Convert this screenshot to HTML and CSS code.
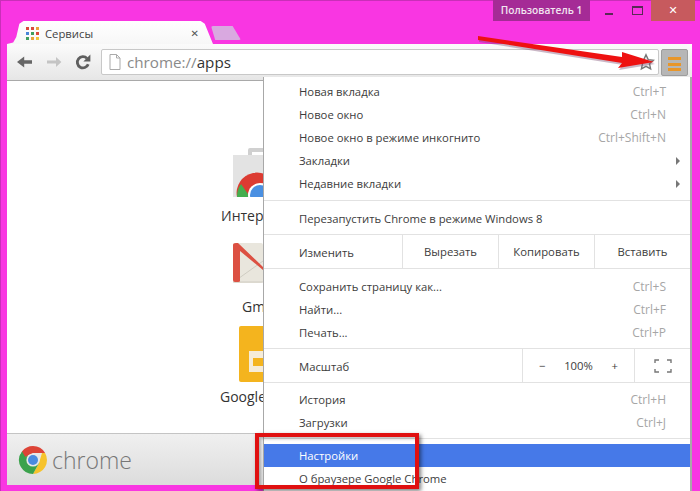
FILE: index.html
```html
<!doctype html>
<html lang="ru">
<head>
    <meta charset="UTF-8">
    <title>Сервисы</title>
    <link rel="stylesheet" href="styles.css">
</head>
<body>
    <div class="title-bar">
        <div class="user-badge">Пользователь 1</div>
        <div class="win-btn"><span class="win-min"></span></div>
        <div class="win-btn"><span class="win-max"></span></div>
        <div class="win-close">✕</div>
    </div>

    <div class="window">
        <div class="tab-strip">
            <div class="tab">
                <div class="favicon">
                    <i class="c-red"></i><i class="c-red"></i><i class="c-orange"></i>
                    <i class="c-blue"></i><i class="c-green"></i><i class="c-red"></i>
                    <i class="c-green"></i><i class="c-orange"></i><i class="c-yellow"></i>
                </div>
                <span class="tab-title">Сервисы</span>
                <span class="tab-close">✕</span>
            </div>
            <div class="new-tab"></div>
        </div>

        <div class="toolbar">
            <svg class="nav-icon" width="18" height="18" viewBox="0 0 18 18"><path d="M16 7.2H8.2V3.4L1 9l7.2 5.6v-3.8H16z" fill="#666"/></svg>
            <svg class="nav-icon" width="18" height="18" viewBox="0 0 18 18"><path d="M2 7.6h9V4l5.4 5-5.4 5v-3.6H2z" fill="#c4c4c4"/></svg>
            <svg class="nav-icon" width="18" height="18" viewBox="0 0 18 18"><path d="M14.2 11.2A5.6 5.6 0 1 1 13 5.4" fill="none" stroke="#5f5f5f" stroke-width="2.8"/><path d="M16.4 1.6v7h-7z" fill="#5f5f5f"/></svg>
            <div class="omnibox">
                <svg class="page-icon" width="12" height="16" viewBox="0 0 12 16"><path d="M1 .5h6.5L11 4v11.5H1z M7.5 .5V4H11" fill="#fff" stroke="#aaa"/></svg>
                <span class="url-scheme">chrome://</span><span class="url-host">apps</span>
                <svg class="star-icon" width="18" height="18" viewBox="0 0 18 18"><path d="M9 1.8l2.2 4.8 5.2.6-3.9 3.5 1.1 5.2L9 13.3l-4.6 2.6 1.1-5.2L1.6 7.2l5.2-.6z" fill="#eee" stroke="#777" stroke-width="1.4"/></svg>
            </div>
            <div class="menu-btn"><i></i><i></i><i></i></div>
        </div>

        <div class="content">
            <div class="app app-store">
                <svg width="30" height="50" viewBox="0 0 30 50">
                    <path d="M15 9V3a2 2 0 0 1 2-2h14v4H19v4z" fill="#d0d0d0"/>
                    <rect y="8" width="30" height="42" fill="#e3e3e3"/>
                    <path d="M4 50a20 20 0 0 1 40-8v8z" fill="#dc3b32"/>
                    <path d="M4 50a20 20 0 0 1 4-13l9 13z" fill="#45ae4f"/>
                    <circle cx="27" cy="48" r="12" fill="#fff"/>
                    <circle cx="27" cy="48" r="10" fill="#4a90e2"/>
                </svg>
                <div class="app-name">Интер</div>
            </div>
            <div class="app app-gmail">
                <svg width="30" height="40" viewBox="0 0 30 40">
                    <rect width="30" height="40" rx="2" fill="#e9e6dd"/>
                    <path d="M2 38l28-20M0 39h30" stroke="#cfccc2" fill="none"/>
                    <path d="M0 2q0-2 3-2h2l25 24v3L7 8v30q0 1-2 1H2q-2 0-2-2z" fill="#dc5042"/>
                </svg>
                <div class="app-name">Gm</div>
            </div>
            <div class="app app-slides">
                <svg width="24" height="56" viewBox="0 0 24 56">
                    <rect width="36" height="56" rx="2" fill="#f4b41e"/>
                    <path d="M10 25h26v21H10z" fill="#f6ecd8"/>
                    <path d="M14 32h22v8H14z" fill="#f4b41e"/>
                </svg>
                <div class="app-name">Google</div>
            </div>
        </div>

        <div class="footer">
            <svg width="30" height="30" viewBox="0 0 30 30">
                <path d="M15 15L4.6 21A12 12 0 0 1 4.6 6z" fill="#4caf50"/>
                <path d="M15 1a14 14 0 0 1 12.1 7H15L5 13 4 6.5A14 14 0 0 1 15 1z" fill="#dd4437"/>
                <path d="M27.1 8A14 14 0 0 1 15 29l6-11 3-10z" fill="#f6c32c"/>
                <path d="M2.9 22A14 14 0 0 1 4 6.5L11 18l10 0-6 11A14 14 0 0 1 2.9 22z" fill="#3ba24c"/>
                <circle cx="15" cy="15" r="6.6" fill="#e8e8e8"/>
                <circle cx="15" cy="15" r="5" fill="#4a8be0"/>
            </svg>
            <span class="chrome-word">chrome</span>
        </div>
    </div>

    <!-- выпадающее меню -->
    <div class="menu">
        <div class="menu-group">
            <div class="menu-item"><span>Новая вкладка</span><span class="keys">Ctrl+T</span></div>
            <div class="menu-item"><span>Новое окно</span><span class="keys">Ctrl+N</span></div>
            <div class="menu-item"><span>Новое окно в режиме инкогнито</span><span class="keys">Ctrl+Shift+N</span></div>
            <div class="menu-item"><span>Закладки</span><span class="sub-arrow"></span></div>
            <div class="menu-item"><span>Недавние вкладки</span><span class="sub-arrow"></span></div>
        </div>
        <div class="menu-group short">
            <div class="menu-item"><span>Перезапустить Chrome в режиме Windows 8</span></div>
        </div>
        <div class="menu-row edit-row">
            <div class="row-label">Изменить</div>
            <div class="row-cell">Вырезать</div>
            <div class="row-cell">Копировать</div>
            <div class="row-cell">Вставить</div>
        </div>
        <div class="menu-group short">
            <div class="menu-item"><span>Сохранить страницу как...</span><span class="keys">Ctrl+S</span></div>
            <div class="menu-item"><span>Найти...</span><span class="keys">Ctrl+F</span></div>
            <div class="menu-item"><span>Печать...</span><span class="keys">Ctrl+P</span></div>
        </div>
        <div class="menu-row zoom-row">
            <div class="row-label">Масштаб</div>
            <div class="row-cell zoom-cell"><span>−</span><span>100%</span><span>+</span></div>
            <div class="row-cell">
                <svg width="18" height="14" viewBox="0 0 18 14"><path d="M1 4V1h4M13 1h4v3M17 10v3h-4M5 13H1v-3" fill="none" stroke="#777" stroke-width="1.4"/></svg>
            </div>
        </div>
        <div class="menu-group last">
            <div class="menu-item"><span>История</span><span class="keys">Ctrl+H</span></div>
            <div class="menu-item"><span>Загрузки</span><span class="keys">Ctrl+J</span></div>
        </div>
        <div class="menu-item active"><span>Настройки</span></div>
        <div class="menu-item"><span>О браузере Google Chrome</span></div>
    </div>

    <!-- пометки поверх скриншота -->
    <svg class="red-arrow" width="200" height="50" viewBox="0 0 200 50">
        <path d="M8 9L8 12 L152 35 L148 40 L184 34 L152 24 L152 29z" fill="#7a4a70" opacity=".4" transform="translate(1 2)"/>
        <path d="M8 8L8 12 L152 35 L148 40 L184 34 L152 24 L152 29z" fill="#ee1111"/>
    </svg>
    <div class="red-box"></div>
</body>
</html>
```

FILE: styles.css
```css
html, body {
    margin: 0;
    padding: 0;
}
body {
    width: 700px;
    height: 491px;
    overflow: hidden;
    position: relative;
    background-color: #f936e2;
    box-shadow: inset 1px 1px 0 #c92fb8;
    font-family: 'Open Sans', 'Liberation Sans', sans-serif;
    font-size: 12px;
    color: #333;
}
.title-bar {
    height: 21px;
    display: flex;
    justify-content: flex-end;
    padding-right: 5px;
}
.user-badge {
    width: 97px;
    margin-right: 5px;
    background-color: #a52b96;
    color: #f2e6f0;
    font-size: 10.2px;
    font-weight: 600;
    line-height: 21px;
    text-align: center;
}
.win-btn {
    width: 28px;
    display: flex;
    align-items: center;
    justify-content: center;
}
.win-min {
    width: 8px;
    height: 2px;
    margin-top: 7px;
    background-color: #5a2a55;
}
.win-max {
    width: 9px;
    height: 6px;
    border: 1px solid #5a2a55;
    border-top-width: 2px;
}
.win-close {
    width: 44px;
    background-color: #c75a5e;
    color: #fff;
    text-align: center;
    line-height: 21px;
    font-size: 11px;
    font-family: 'DejaVu Sans', sans-serif;
}
.window {
    margin: 0 8px 0 7px;
}
.tab-strip {
    height: 23px;
    display: flex;
    align-items: flex-end;
}
.tab {
    width: 206px;
    height: 23px;
    box-sizing: border-box;
    padding: 1px 12px 0 19px;
    display: flex;
    align-items: center;
    background: linear-gradient(#ffffff, #f7f7f7);
    clip-path: polygon(0 100%, 3% 94%, 4.5% 70%, 6% 12%, 8% 0, 94% 0, 96% 12%, 100% 100%);
}
.favicon {
    width: 13px;
    display: grid;
    grid-template-columns: repeat(3, 3px);
    gap: 2px;
    margin-right: 6px;
}
.favicon i {
    height: 3px;
}
.c-red { background-color: #d9493c; }
.c-orange { background-color: #e8a33a; }
.c-blue { background-color: #4a86d8; }
.c-green { background-color: #3f9e5e; }
.c-yellow { background-color: #f0c53c; }
.tab-title {
    flex: 1;
    font-size: 11.3px;
    color: #444;
}
.tab-close {
    font-family: 'DejaVu Sans', sans-serif;
    font-size: 10px;
    font-weight: bold;
    color: #555;
    margin-right: 2px;
}
.new-tab {
    width: 30px;
    height: 14px;
    margin: 0 0 4px -2px;
    background-color: #d9a9e0;
    clip-path: polygon(0 0, 72% 0, 100% 100%, 14% 100%);
    border-radius: 2px;
}
.toolbar {
    height: 37px;
    box-sizing: border-box;
    padding: 5px 3px 0 9px;
    display: flex;
    align-items: flex-start;
    background: linear-gradient(#fbfbfb, #e6e6e6);
    border-bottom: 1px solid #a9a9a9;
}
.nav-icon {
    margin: 4px 11px 0 0;
}
.omnibox {
    width: 558px;
    height: 26px;
    box-sizing: border-box;
    margin-left: -2px;
    display: flex;
    align-items: center;
    padding: 0 3px 0 7px;
    background-color: #fff;
    border: 1px solid #c8c8c8;
    border-radius: 2px;
    font-size: 15.2px;
}
.page-icon {
    margin-right: 6px;
}
.url-scheme {
    color: #8a8a8a;
}
.url-host {
    flex: 1;
    color: #333;
}
.menu-btn {
    width: 27px;
    height: 27px;
    box-sizing: border-box;
    margin-left: 2px;
    padding-top: 7px;
    background-color: #b6b6b6;
    border: 1px solid #9d9d9d;
    border-radius: 2px;
}
.menu-btn i {
    display: block;
    width: 13px;
    height: 3px;
    margin: 0 auto 2.5px;
    background-color: #e8962a;
}
.content {
    height: 352px;
    background-color: #fff;
    padding-left: 226px;
    box-sizing: border-box;
    display: flex;
    flex-direction: column;
    position: relative;
}
.app svg {
    display: block;
}
.app-name {
    font-size: 14px;
    white-space: nowrap;
    color: #333;
}
.app-store {
    margin-top: 66px;
}
.app-store .app-name {
    margin: 9px 0 0 -12px;
}
.app-gmail {
    margin-top: 18px;
}
.app-gmail .app-name {
    margin: 14px 0 0 9px;
}
.app-slides {
    margin: 10px 0 0 6px;
}
.app-slides .app-name {
    margin: 5px 0 0 -19px;
}
.footer {
    height: 52px;
    box-sizing: border-box;
    padding: 0 0 0 11px;
    display: flex;
    align-items: center;
    gap: 4px;
    background: linear-gradient(#f0f0f0, #dcdcdc);
    border-top: 1px solid #c4c4c4;
}
.chrome-word {
    font-size: 23px;
    font-weight: 300;
    color: #777;
    line-height: 36px;
}
.menu {
    position: absolute;
    left: 263px;
    top: 77px;
    width: 427px;
    height: 414px;
    box-sizing: border-box;
    background-color: #fff;
    border-left: 1px solid #a8a8a8;
    box-shadow: 2px 0 0 #a9a9a9;
    padding-top: 3px;
}
.menu-group {
    padding-bottom: 5px;
    margin-bottom: 6px;
    border-bottom: 1px solid #e2e2e2;
}
.menu-group.short {
    padding-bottom: 4px;
}
.menu-group.last {
    padding-bottom: 4px;
    margin-bottom: 5px;
}
.menu-item {
    height: 23px;
    box-sizing: border-box;
    padding: 0 24px 0 35px;
    display: flex;
    align-items: center;
    justify-content: space-between;
    font-size: 11.3px;
    color: #3c3c3c;
}
.keys {
    font-size: 12px;
    color: #a6a6a6;
}
.sub-arrow {
    width: 0;
    height: 0;
    margin-right: -14px;
    border-left: 4px solid #777;
    border-top: 4px solid transparent;
    border-bottom: 4px solid transparent;
}
.menu-row {
    height: 34px;
    box-sizing: border-box;
    display: flex;
    margin: -6px 0 6px;
    border-bottom: 1px solid #e2e2e2;
    font-size: 11.3px;
    color: #3c3c3c;
}
.zoom-row {
    margin-bottom: 5px;
}
.row-label {
    flex: 1;
    padding-left: 35px;
    line-height: 36px;
}
.row-cell {
    display: flex;
    align-items: center;
    justify-content: center;
    border-left: 1px solid #e2e2e2;
}
.edit-row .row-cell {
    width: 95px;
}
.zoom-row .row-cell {
    width: 55px;
}
.zoom-row .zoom-cell {
    width: 112px;
    justify-content: space-between;
    padding: 0 16px;
    box-sizing: border-box;
}
.menu-item.active {
    background-color: #4679e8;
    color: #fff;
}
.red-arrow {
    position: absolute;
    left: 470px;
    top: 28px;
}
.red-box {
    position: absolute;
    left: 255px;
    top: 433px;
    width: 164px;
    height: 56px;
    box-sizing: border-box;
    border: 4px solid #e01010;
    box-shadow: 2px 2px 4px rgba(0,0,0,0.5), inset 2px 2px 3px rgba(0,0,0,0.25);
}
```
